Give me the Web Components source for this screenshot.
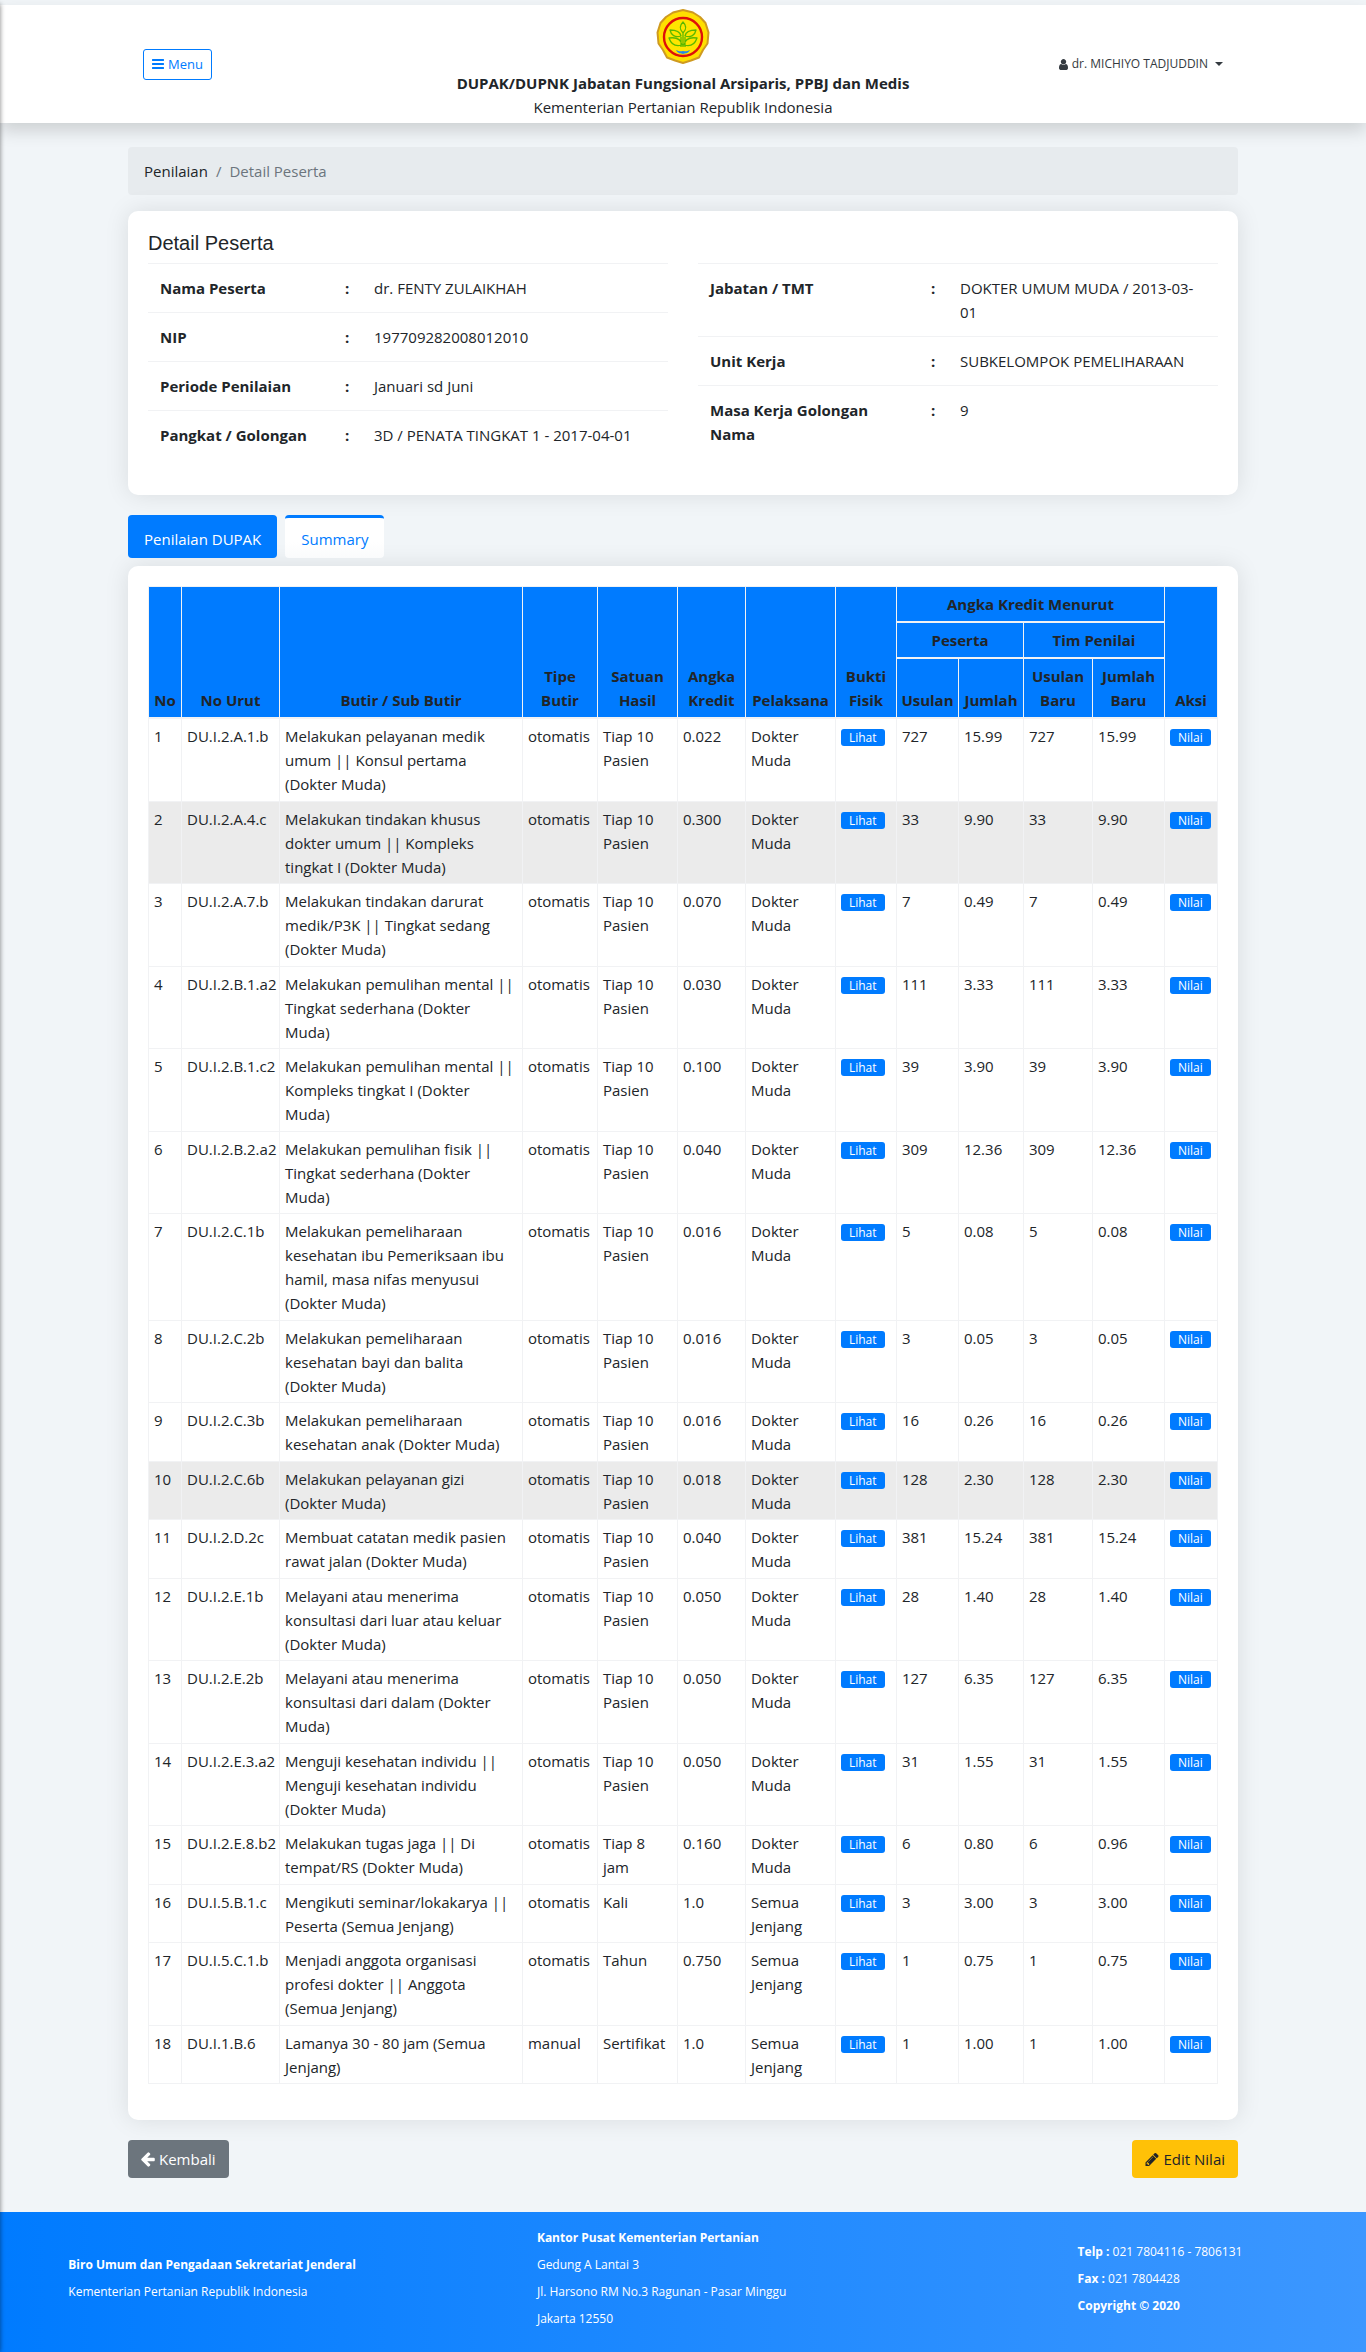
<!DOCTYPE html>
<html lang="id">
<head>
<meta charset="utf-8">
<meta name="viewport" content="width=device-width, initial-scale=1">
<title>Detail Peserta</title>
<style>
  body { margin: 0; background: #f1f5f8; color: #212529; font: 15px/24px "Open Sans", "Noto Sans", sans-serif; }
</style>
</head>
<body>
<dupak-app></dupak-app>

<script>
const ICONS = {
  bars: ['0 0 1536 1280', 'M1536 1088v128q0 26-19 45t-45 19H64q-26 0-45-19t-19-45v-128q0-26 19-45t45-19h1408q26 0 45 19t19 45zm0-512v128q0 26-19 45t-45 19H64q-26 0-45-19T0 704V576q0-26 19-45t45-19h1408q26 0 45 19t19 45zm0-512v128q0 26-19 45t-45 19H64q-26 0-45-19T0 192V64q0-26 19-45T64 0h1408q26 0 45 19t19 45z'],
  user: ['0 0 1280 1536', 'M1280 1271q0 109-62 187t-150 78H212q-88 0-150-78T0 1271q0-85 9-160t31-152 59-131 94-89 135-35q131 128 312 128t312-128q77 0 135 35t94 89 59 131 31 152 9 160zM1024 384q0 159-113 272T640 768 369 656 256 384t113-272T640 0t271 112 113 272z'],
  arrow: ['0 0 1472 1408', 'M1472 640v128q0 53-33 91t-84 37H651l293 294q38 36 38 90t-38 90l-75 76q-37 37-90 37-52 0-91-37L37 794Q0 757 0 704q0-52 37-91L688-37q38-38 91-38 52 0 90 38l75 74q38 38 38 91t-38 91L651 512h704q51 0 84 37t33 91z'],
  pencil: ['0 0 1515 1515', 'M363 1387l91-91-235-235-91 91v107h128v128h107zM886 459q0-22-22-22-10 0-17 7L305 986q-7 7-7 17 0 22 22 22 10 0 17-7l542-542q7-7 7-17zM832 267l416 416-832 832H0v-416zM1515 363q0 53-37 90l-166 166-416-416 166-165q36-38 90-38 53 0 91 38l235 234q37 39 37 91z']
};

function define(name, markup, setup) {
  customElements.define(name, class extends HTMLElement {
    constructor() {
      super();
      this.attachShadow({ mode: 'open' });
    }
    connectedCallback() {
      this.shadowRoot.innerHTML = typeof markup === 'function' ? markup(this) : markup;
      if (setup) setup(this.shadowRoot, this);
    }
  });
}

define('app-icon', host => {
  const [box, path] = ICONS[host.getAttribute('name')];
  return `<style>
    :host { display: inline-block; width: 12px; height: 12px; }
    svg { display: block; width: 100%; height: 100%; fill: currentColor; overflow: visible; }
  </style><svg viewBox="${box}" aria-hidden="true"><path d="${path}"/></svg>`;
});

define('ministry-logo', `
  <style>:host { display: block; width: 54px; height: 55px; } svg { display: block; }</style>
  <svg width="54" height="55" viewBox="0 0 54 55" role="img" aria-label="Kementerian Pertanian">
    <path d="M27 1 37 3.500 44 8 49.500 14 52.500 23.500 51.500 34.500 47 41 43 48.500 35 51.500 27 54 19 51.500 11 48.500 7 41 2.500 34.500 1.500 23.500 4.500 14 10 8 17 3.500Z" fill="#ffdf00" stroke="#cf9a20" stroke-width="2" stroke-linejoin="round"/>
    <ellipse cx="27" cy="28" rx="19" ry="19" fill="#ffe500" stroke="#de1009" stroke-width="2.400"/>
    <g fill="none" stroke="#5cb800" stroke-width="1.300" stroke-linejoin="round">
      <path d="M27 13c-4 4-3 8 0 11 3-3 4-7 0-11ZM27 24v14M25 27c-1-5-5-6-11-6 1 5 5 8 11 6ZM29 27c1-5 5-6 11-6-1 5-5 8-11 6ZM26 36c-1-6-6-8-13-7 2 6 6 9 13 7ZM28 36c1-6 6-8 13-7-2 6-6 9-13 7ZM25 38v-10M29 38v-10"/>
    </g>
    <path d="M20 41c4 2 5 1 7 1s3 1 7-1c-2 4-5 3-7 4-2-1-5 0-7-4Z" fill="#2587e8"/>
  </svg>`);

define('app-header', `
  <style>
    :host { display: block; background: #fff; box-shadow: 0 8px 16px rgba(0,0,0,.15); }
    .bar { display: grid; grid-template-columns: 1fr auto 1fr; align-items: center; max-width: 1080px; margin: 0 auto; padding: 4px 15px; }
    button { font: inherit; cursor: pointer; background: none; }
    .menu { justify-self: start; display: flex; align-items: center; gap: 4px; padding: 4px 8px; border: 1px solid #007bff; border-radius: 3px; color: #007bff; font-size: 13px; line-height: 21px; }
    .menu app-icon { height: 10px; }
    .brand { display: flex; flex-direction: column; align-items: center; text-align: center; }
    h1 { margin: 7px 0 0; font-size: 15px; line-height: 24px; font-weight: 700; }
    p { margin: 0; }
    .user { justify-self: end; display: flex; align-items: center; gap: 4px; border: 0; padding: 0; color: #343a40; font-size: 12px; line-height: 20px; }
    .user app-icon { width: 9px; height: 11px; }
    .caret { margin-left: 3px; border: 4px solid transparent; border-top-color: currentColor; border-bottom: 0; }
  </style>
  <div class="bar">
    <button class="menu" type="button"><app-icon name="bars"></app-icon>Menu</button>
    <div class="brand">
      <ministry-logo></ministry-logo>
      <h1>DUPAK/DUPNK Jabatan Fungsional Arsiparis, PPBJ dan Medis</h1>
      <p>Kementerian Pertanian Republik Indonesia</p>
    </div>
    <button class="user" type="button"><app-icon name="user"></app-icon>dr. MICHIYO TADJUDDIN <span class="caret"></span></button>
  </div>`);

define('app-breadcrumb', `
  <style>
    :host { display: block; padding: 12px 16px; border-radius: 4px; background: #e7ebee; }
    ol { display: flex; gap: 8px; margin: 0; padding: 0; list-style: none; }
    a { color: inherit; text-decoration: none; }
    li + li { color: #6c757d; }
    li + li::before { content: "/"; margin-right: 8px; }
  </style>
  <nav aria-label="breadcrumb"><ol><li><a href="#">Penilaian</a></li><li aria-current="page">Detail Peserta</li></ol></nav>`);

define('app-card', `
  <style>
    :host { display: block; padding: 20px 20px 36px; border-radius: 10px; background: #fff; box-shadow: 0 0 24px rgba(0,0,0,.1); }
  </style><slot></slot>`);

define('participant-detail', `
  <style>
    :host { display: block; }
    h2 { margin: 0; padding-bottom: 8px; font: 400 20px/24px "Liberation Sans", sans-serif; }
    .cols { display: grid; grid-template-columns: 1fr 1fr; gap: 30px; align-items: start; }
    table { width: 100%; table-layout: fixed; border-collapse: separate; border-spacing: 0; }
    th, td { padding: 12px; border-top: 1px solid #f1f2f4; text-align: left; vertical-align: top; font-weight: 400; }
    th, .colon { font-weight: 700; }
    .label { width: 161px; }
    .wide .label { width: 197px; }
    .sep { width: 5px; }
  </style>
  <h2>Detail Peserta</h2>
  <div class="cols">
    <table>
      <tr><th class="label" scope="row">Nama Peserta</th><td class="colon sep">:</td><td>dr. FENTY ZULAIKHAH</td></tr>
      <tr><th scope="row">NIP</th><td class="colon">:</td><td>197709282008012010</td></tr>
      <tr><th scope="row">Periode Penilaian</th><td class="colon">:</td><td>Januari sd Juni</td></tr>
      <tr><th scope="row">Pangkat / Golongan</th><td class="colon">:</td><td>3D / PENATA TINGKAT 1 - 2017-04-01</td></tr>
    </table>
    <table class="wide">
      <tr><th class="label" scope="row">Jabatan / TMT</th><td class="colon sep">:</td><td>DOKTER UMUM MUDA / 2013-03-01</td></tr>
      <tr><th scope="row">Unit Kerja</th><td class="colon">:</td><td>SUBKELOMPOK PEMELIHARAAN</td></tr>
      <tr><th scope="row">Masa Kerja Golongan<br>Nama</th><td class="colon">:</td><td>9</td></tr>
    </table>
  </div>`);

define('app-tabs', `
  <style>
    :host { display: block; }
    nav { display: flex; gap: 8px; }
    a { padding: 9px 16px 7px; border-top: 3px solid #007bff; border-radius: 4px; text-decoration: none; color: #007bff; background: linear-gradient(#fff 60%, #fafbfc); }
    a[aria-current] { background: #007bff; color: #fff; }
  </style>
  <nav><a href="#dupak" aria-current="page">Penilaian DUPAK</a><a href="#summary">Summary</a></nav>`);

const ROWS = [
  ['DU.I.2.A.1.b', 'Melakukan pelayanan medik umum || Konsul pertama (Dokter Muda)', 'otomatis', 'Tiap 10 Pasien', '0.022', 'Dokter Muda', '727', '15.99', '15.99'],
  ['DU.I.2.A.4.c', 'Melakukan tindakan khusus dokter umum || Kompleks tingkat I (Dokter Muda)', 'otomatis', 'Tiap 10 Pasien', '0.300', 'Dokter Muda', '33', '9.90', '9.90', true],
  ['DU.I.2.A.7.b', 'Melakukan tindakan darurat medik/P3K || Tingkat sedang (Dokter Muda)', 'otomatis', 'Tiap 10 Pasien', '0.070', 'Dokter Muda', '7', '0.49', '0.49'],
  ['DU.I.2.B.1.a2', 'Melakukan pemulihan mental || Tingkat sederhana (Dokter Muda)', 'otomatis', 'Tiap 10 Pasien', '0.030', 'Dokter Muda', '111', '3.33', '3.33'],
  ['DU.I.2.B.1.c2', 'Melakukan pemulihan mental || Kompleks tingkat I (Dokter Muda)', 'otomatis', 'Tiap 10 Pasien', '0.100', 'Dokter Muda', '39', '3.90', '3.90'],
  ['DU.I.2.B.2.a2', 'Melakukan pemulihan fisik || Tingkat sederhana (Dokter Muda)', 'otomatis', 'Tiap 10 Pasien', '0.040', 'Dokter Muda', '309', '12.36', '12.36'],
  ['DU.I.2.C.1b', 'Melakukan pemeliharaan kesehatan ibu Pemeriksaan ibu hamil, masa nifas menyusui (Dokter Muda)', 'otomatis', 'Tiap 10 Pasien', '0.016', 'Dokter Muda', '5', '0.08', '0.08'],
  ['DU.I.2.C.2b', 'Melakukan pemeliharaan kesehatan bayi dan balita (Dokter Muda)', 'otomatis', 'Tiap 10 Pasien', '0.016', 'Dokter Muda', '3', '0.05', '0.05'],
  ['DU.I.2.C.3b', 'Melakukan pemeliharaan kesehatan anak (Dokter Muda)', 'otomatis', 'Tiap 10 Pasien', '0.016', 'Dokter Muda', '16', '0.26', '0.26'],
  ['DU.I.2.C.6b', 'Melakukan pelayanan gizi (Dokter Muda)', 'otomatis', 'Tiap 10 Pasien', '0.018', 'Dokter Muda', '128', '2.30', '2.30', true],
  ['DU.I.2.D.2c', 'Membuat catatan medik pasien rawat jalan (Dokter Muda)', 'otomatis', 'Tiap 10 Pasien', '0.040', 'Dokter Muda', '381', '15.24', '15.24'],
  ['DU.I.2.E.1b', 'Melayani atau menerima konsultasi dari luar atau keluar (Dokter Muda)', 'otomatis', 'Tiap 10 Pasien', '0.050', 'Dokter Muda', '28', '1.40', '1.40'],
  ['DU.I.2.E.2b', 'Melayani atau menerima konsultasi dari dalam (Dokter Muda)', 'otomatis', 'Tiap 10 Pasien', '0.050', 'Dokter Muda', '127', '6.35', '6.35'],
  ['DU.I.2.E.3.a2', 'Menguji kesehatan individu || Menguji kesehatan individu (Dokter Muda)', 'otomatis', 'Tiap 10 Pasien', '0.050', 'Dokter Muda', '31', '1.55', '1.55'],
  ['DU.I.2.E.8.b2', 'Melakukan tugas jaga || Di tempat/RS (Dokter Muda)', 'otomatis', 'Tiap 8 jam', '0.160', 'Dokter Muda', '6', '0.80', '0.96'],
  ['DU.I.5.B.1.c', 'Mengikuti seminar/lokakarya || Peserta (Semua Jenjang)', 'otomatis', 'Kali', '1.0', 'Semua Jenjang', '3', '3.00', '3.00'],
  ['DU.I.5.C.1.b', 'Menjadi anggota organisasi profesi dokter || Anggota (Semua Jenjang)', 'otomatis', 'Tahun', '0.750', 'Semua Jenjang', '1', '0.75', '0.75'],
  ['DU.I.1.B.6', 'Lamanya 30 - 80 jam (Semua Jenjang)', 'manual', 'Sertifikat', '1.0', 'Semua Jenjang', '1', '1.00', '1.00']
];

define('credit-table', () => `
  <style>
    :host { display: block; }
    table { width: 100%; table-layout: fixed; border-collapse: collapse; border: 1px solid #f1f2f4; }
    th, td { border: 1px solid #f1f2f4; padding: 5px; text-align: left; vertical-align: top; }
    tbody tr:nth-child(even) td { padding-bottom: 4px; }
    th { padding: 5px 0; background: #007bff; text-align: center; vertical-align: bottom; border-bottom-width: 2px; font-weight: 700; }
    .marked td { background: #ebebeb; }
    td a { display: inline-block; vertical-align: middle; padding: 0 8px; border-radius: 3px; background: #007bff; color: #fff; font-size: 12px; line-height: 17px; text-decoration: none; }
  </style>
  <table>
    <colgroup>${[33, 98, 0, 75, 80, 68, 90, 61, 62, 65, 69, 72, 53].map(w => w ? `<col style="width:${w}px">` : '<col>').join('')}</colgroup>
    <thead>
      <tr><th rowspan="3">No</th><th rowspan="3">No Urut</th><th rowspan="3">Butir / Sub Butir</th><th rowspan="3">Tipe<br>Butir</th><th rowspan="3">Satuan<br>Hasil</th><th rowspan="3">Angka<br>Kredit</th><th rowspan="3">Pelaksana</th><th rowspan="3">Bukti<br>Fisik</th><th colspan="4">Angka Kredit Menurut</th><th rowspan="3">Aksi</th></tr>
      <tr><th colspan="2">Peserta</th><th colspan="2">Tim Penilai</th></tr>
      <tr><th>Usulan</th><th>Jumlah</th><th>Usulan<br>Baru</th><th>Jumlah<br>Baru</th></tr>
    </thead>
    <tbody>${ROWS.map(([code, item, type, unit, credit, actor, qty, sum, newSum, marked], i) => `
      <tr${marked ? ' class="marked"' : ''}><td>${i + 1}</td><td>${code}</td><td>${item}</td><td>${type}</td><td>${unit}</td><td>${credit}</td><td>${actor}</td><td><a href="#lihat">Lihat</a></td><td>${qty}</td><td>${sum}</td><td>${qty}</td><td>${newSum}</td><td><a href="#nilai">Nilai</a></td></tr>`).join('')}
    </tbody>
  </table>`);

define('page-actions', `
  <style>
    :host { display: flex; justify-content: space-between; }
    button { display: flex; align-items: center; gap: 4px; padding: 6px 12px; border: 1px solid transparent; border-radius: 4px; font: inherit; cursor: pointer; }
    .back { background: #6c757d; color: #fff; }
    .edit { background: #ffc107; color: #212529; }
    app-icon { width: 14px; height: 13px; }
  </style>
  <button class="back" type="button"><app-icon name="arrow"></app-icon>Kembali</button>
  <button class="edit" type="button"><app-icon name="pencil"></app-icon>Edit Nilai</button>`);

define('app-footer', `
  <style>
    :host { display: block; background: linear-gradient(90deg, #007bff, #3c97ff); color: #fff; font-size: 12px; line-height: 27px; }
    footer { display: grid; grid-template-columns: 13fr 15fr 8fr; align-items: center; padding: 12px 0 20px 5%; }
    p { margin: 0; }
  </style>
  <footer>
    <div><p><b>Biro Umum dan Pengadaan Sekretariat Jenderal</b></p><p>Kementerian Pertanian Republik Indonesia</p></div>
    <div><p><b>Kantor Pusat Kementerian Pertanian</b></p><p>Gedung A Lantai 3</p><p>Jl. Harsono RM No.3 Ragunan - Pasar Minggu</p><p>Jakarta 12550</p></div>
    <div><p><b>Telp :</b> 021 7804116 - 7806131</p><p><b>Fax :</b> 021 7804428</p><p><b>Copyright © 2020</b></p></div>
  </footer>`);

define('dupak-app', `
  <style>
    :host { display: block; position: relative; padding-top: 5px; overflow: hidden; }
    main { display: block; max-width: 1110px; margin: 24px auto 34px; }
    app-breadcrumb { margin-bottom: 16px; }
    app-tabs { margin: 20px 0 8px; }
    page-actions { margin-top: 20px; }
    .drawer { position: absolute; top: 4px; bottom: 0; left: -10px; width: 10px; box-shadow: 0 0 5px rgba(0,0,0,.5); }
  </style>
  <app-header></app-header>
  <main>
    <app-breadcrumb></app-breadcrumb>
    <app-card><participant-detail></participant-detail></app-card>
    <app-tabs></app-tabs>
    <app-card><credit-table></credit-table></app-card>
    <page-actions></page-actions>
  </main>
  <app-footer></app-footer>
  <div class="drawer"></div>`);
</script>
</body>
</html>
